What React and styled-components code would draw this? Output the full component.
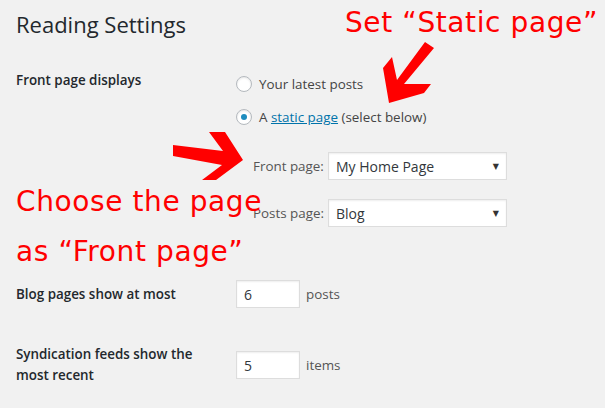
import React from "react";
import styled, { createGlobalStyle } from "styled-components";

const Global = createGlobalStyle`
  html, body { margin: 0; padding: 0; background: #f1f1f1; }
  body {
    width: 605px; height: 408px; overflow: hidden;
    font-family: "Open Sans", "Noto Sans", sans-serif;
    color: #444;
  }
`;

const Page = styled.div`
  position: relative;
  width: 605px;
  height: 408px;
  padding-left: 16px;
  box-sizing: border-box;
`;

const Title = styled.h1`
  margin: 0;
  padding-top: 10px;
  font-size: 22px;
  font-weight: 400;
  line-height: 29px;
  color: #23282d;
`;

const Form = styled.div`
  display: flex;
  flex-direction: column;
  margin-top: 31px;
`;

const Row = styled.div`
  display: grid;
  grid-template-columns: 220px 1fr;
  align-items: ${(p) => (p.$top ? "start" : "center")};
  margin-top: ${(p) => p.$mt || 0}px;
`;

const Th = styled.div`
  width: 200px;
  font-size: 13.4px;
  font-weight: 600;
  line-height: 21px;
  color: #23282d;
`;

const Td = styled.div`
  padding-top: ${(p) => p.$pt || 0}px;
  display: flex;
  flex-direction: column;
`;

const RadioList = styled.div`
  display: flex;
  flex-direction: column;
  gap: 13px;
`;

const RadioLine = styled.label`
  display: flex;
  align-items: center;
  gap: 7px;
  height: 20px;
  font-size: 13.4px;
  color: #444;
`;

const Radio = styled.span`
  width: 16px;
  height: 16px;
  box-sizing: border-box;
  border-radius: 50%;
  border: 1px solid #b4b9be;
  background: #fff;
  box-shadow: inset 0 1px 2px rgba(0, 0, 0, 0.1);
  display: flex;
  align-items: center;
  justify-content: center;
  &::after {
    content: "";
    display: ${(p) => (p.$checked ? "block" : "none")};
    width: 6px;
    height: 6px;
    border-radius: 50%;
    background: #1e8cbe;
  }
`;

const Link = styled.a`
  color: #0073aa;
  text-decoration: underline;
`;

const SubOptions = styled.div`
  display: flex;
  flex-direction: column;
  gap: 19px;
  margin-top: 25px;
  padding-left: 17px;
`;

const SelectRow = styled.div`
  display: flex;
  align-items: center;
`;

const SelectLabel = styled.span`
  width: 75px;
  font-size: 13.4px;
  color: #555;
`;

const SelectBox = styled.div`
  width: 179px;
  height: 28px;
  box-sizing: border-box;
  border: 1px solid #ddd;
  background: #fff;
  box-shadow: inset 0 1px 2px rgba(0, 0, 0, 0.07);
  display: flex;
  align-items: center;
  justify-content: space-between;
  padding: 0 7px;
  font-size: 14px;
  color: #32373c;
`;

const Caret = styled.span`
  font-family: "DejaVu Sans", sans-serif;
  font-size: 8px;
  color: #333;
`;

const InputRow = styled.div`
  display: flex;
  align-items: center;
  gap: 6px;
`;

const SmallInput = styled.input`
  width: 64px;
  height: 28px;
  box-sizing: border-box;
  margin: 0;
  border: 1px solid #ddd;
  background: #fff;
  box-shadow: inset 0 1px 2px rgba(0, 0, 0, 0.07);
  padding: 0 7px;
  font-family: "Open Sans", "Noto Sans", sans-serif;
  font-size: 14px;
  color: #32373c;
  outline: none;
`;

const Unit = styled.span`
  font-size: 13.4px;
  color: #555;
`;

const Annotation = styled.div`
  position: absolute;
  left: ${(p) => p.$x}px;
  top: ${(p) => p.$y}px;
  font-family: "DejaVu Sans", sans-serif;
  font-size: 28px;
  letter-spacing: 0.6px;
  line-height: 50px;
  color: #ff0000;
  white-space: nowrap;
`;

const ArrowSvg = styled.svg`
  position: absolute;
  left: ${(p) => p.$x}px;
  top: ${(p) => p.$y}px;
`;

export default function App() {
  return (
    <>
      <Global />
      <Page>
        <Title>Reading Settings</Title>
        <Form>
          <Row $top>
            <Th>Front page displays</Th>
            <Td $pt={4}>
              <RadioList>
                <RadioLine>
                  <Radio />
                  Your latest posts
                </RadioLine>
                <RadioLine>
                  <Radio $checked />
                  <span>
                    A <Link href="#">static page</Link> (select below)
                  </span>
                </RadioLine>
              </RadioList>
              <SubOptions>
                <SelectRow>
                  <SelectLabel>Front page:</SelectLabel>
                  <SelectBox>
                    My Home Page<Caret>▼</Caret>
                  </SelectBox>
                </SelectRow>
                <SelectRow>
                  <SelectLabel>Posts page:</SelectLabel>
                  <SelectBox>
                    Blog<Caret>▼</Caret>
                  </SelectBox>
                </SelectRow>
              </SubOptions>
            </Td>
          </Row>
          <Row $mt={53}>
            <Th>Blog pages show at most</Th>
            <InputRow>
              <SmallInput type="number" defaultValue="6" readOnly />
              <Unit>posts</Unit>
            </InputRow>
          </Row>
          <Row $mt={36}>
            <Th>Syndication feeds show the most recent</Th>
            <InputRow>
              <SmallInput type="number" defaultValue="5" readOnly />
              <Unit>items</Unit>
            </InputRow>
          </Row>
        </Form>

        <Annotation $x={345} $y={-2}>Set “Static page”</Annotation>
        <Annotation $x={16} $y={177}>
          Choose the page
          <br />
          as “Front page”
        </Annotation>

        <ArrowSvg $x={380} $y={40} width="60" height="66" viewBox="0 0 60 66">
          <polygon
            fill="#ff0000"
            points="45,2 54,8 24,44 51,44 44,53 9,63 3,28 12,17 17,40"
          />
        </ArrowSvg>
        <ArrowSvg $x={170} $y={128} width="76" height="55" viewBox="0 0 76 55">
          <polygon
            fill="#ff0000"
            points="3,17 53,23 39,4 55,4 73,32 46,52 32,52 52,37 3,28"
          />
        </ArrowSvg>
      </Page>
    </>
  );
}
